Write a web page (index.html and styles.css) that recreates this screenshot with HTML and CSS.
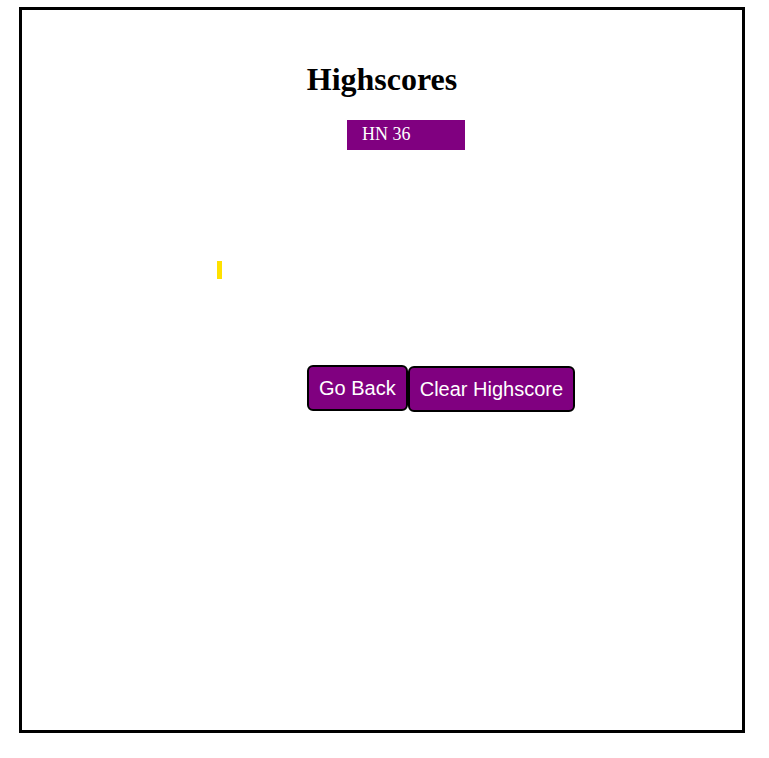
FILE: index.html
```html
<!DOCTYPE html>
<html>
<head>
<meta charset="utf-8">
<title>Highscores</title>
<link rel="stylesheet" href="styles.css">
</head>
<body>
<div class="board">
  <h1 class="title">Highscores</h1>
  <ol class="scores">
    <li class="score">HN 36</li>
  </ol>
  <div class="marker"></div>
  <div class="actions">
    <button class="btn">Go Back</button>
    <button class="btn btn-clear">Clear Highscore</button>
  </div>
</div>
</body>
</html>
```
FILE: styles.css
```css
html, body {
  margin: 0;
  padding: 0;
  background: #ffffff;
}

body {
  font-family: "Liberation Serif", "Times New Roman", serif;
}

.board {
  box-sizing: border-box;
  width: 726px;
  height: 726px;
  margin: 7px 0 0 19px;
  border: 3px solid #000000;
  padding-top: 51px;
  display: flex;
  flex-direction: column;
}

.title {
  margin: 0;
  font-size: 32px;
  line-height: 36px;
  font-weight: bold;
  text-align: center;
  color: #000000;
}

.scores {
  list-style: none;
  margin: 23px 0 0 325px;
  padding: 0;
}

.score {
  box-sizing: border-box;
  width: 118px;
  height: 30px;
  padding: 4px 0 6px 15px;
  font-size: 18px;
  line-height: 20px;
  color: #ffffff;
  background: #800080;
}

.marker {
  width: 5px;
  height: 18px;
  margin: 111px 0 0 195px;
  background: #ffe100;
}

.actions {
  display: flex;
  align-items: flex-start;
  margin: 86px 0 0 285px;
}

.btn {
  box-sizing: border-box;
  height: 46px;
  margin: 0;
  padding: 0 10px;
  border: 2px solid #000000;
  border-radius: 6px;
  background: #800080;
  color: #ffffff;
  font-family: "Liberation Sans", Arial, sans-serif;
  font-size: 20px;
  line-height: 40px;
  cursor: pointer;
}

.btn-clear {
  margin-top: 1px;
}
```
